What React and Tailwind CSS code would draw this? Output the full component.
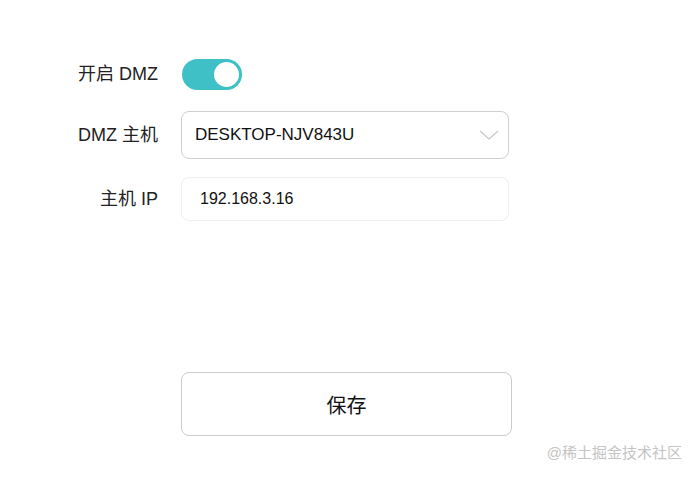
export default function App() {
  const labelCls = "w-[158px] shrink-0 text-right text-[18px] text-[#222]";
  return (
    <div
      className="relative w-[697px] h-[478px] bg-white"
      style={{ fontFamily: '"Liberation Sans", "Noto Sans CJK SC", sans-serif' }}
    >
      <div className="pt-[59px]">
        {/* DMZ switch */}
        <div className="flex items-center h-[31px]">
          <div className={labelCls}>开启 DMZ</div>
          <div className="ml-[24px] w-[60px] h-[31px] rounded-full bg-[#3ec0c6] flex items-center justify-end pr-[3px]">
            <div className="w-[25px] h-[25px] rounded-full bg-white"></div>
          </div>
        </div>

        {/* host select */}
        <div className="flex items-center mt-[21px] h-[48px]">
          <div className={labelCls}>DMZ 主机</div>
          <div className="ml-[23px] w-[328px] h-[48px] rounded-[8px] border border-[#cfcfcf] flex items-center justify-between pl-[13px] pr-[8px]">
            <span className="text-[17px] text-[#111]">DESKTOP-NJV843U</span>
            <svg width="22" height="14" viewBox="0 0 22 14" fill="none">
              <path d="M2 3 L11 11 L20 3" stroke="#c8c8c8" strokeWidth="1.3" />
            </svg>
          </div>
        </div>

        {/* IP */}
        <div className="flex items-center mt-[18px] h-[44px]">
          <div className={labelCls}>主机 IP</div>
          <div className="ml-[23px] w-[328px] h-[44px] rounded-[8px] border border-[#efefef] flex items-center pl-[18px]">
            <span className="text-[16px] text-[#111]">192.168.3.16</span>
          </div>
        </div>

        {/* save */}
        <div className="flex mt-[151px]">
          <div className="w-[158px] shrink-0"></div>
          <button className="ml-[23px] w-[331px] h-[64px] rounded-[8px] border border-[#cccccc] bg-white text-[20px] text-[#111] flex items-center justify-center pt-[4px]">
            保存
          </button>
        </div>
      </div>

      <div className="absolute right-[15px] bottom-[14px] text-[15px] text-[#c4c4c4]">@稀土掘金技术社区</div>
    </div>
  );
}
